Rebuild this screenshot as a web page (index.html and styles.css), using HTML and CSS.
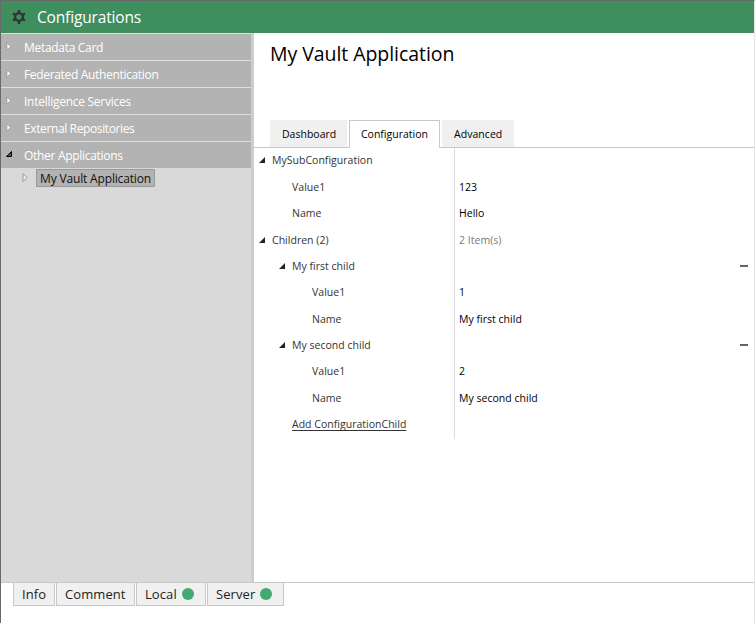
FILE: index.html
```
<!DOCTYPE html>
<html lang="en">
<head>
<meta charset="utf-8">
<title>Configurations</title>
<link rel="stylesheet" href="styles.css">
</head>
<body>
<div class="window">
  <header class="titlebar">
    <svg class="gear" viewBox="0 0 14 14"><circle cx="7" cy="7" r="3.900"/><path d="M7 0v2.500M7 11.500V14M.95 3.500l2.150 1.250M10.900 9.250l2.150 1.250M.95 10.500l2.150-1.250M10.900 4.750l2.150-1.250"/></svg>
    <h1>Configurations</h1>
  </header>
  <div class="main">
    <nav class="sidebar">
      <div class="group"><svg class="arrow" viewBox="0 0 6 9"><path d="M1 1l3.500 3.500L1 8z"/></svg><span>Metadata Card</span></div>
      <div class="group"><svg class="arrow" viewBox="0 0 6 9"><path d="M1 1l3.500 3.500L1 8z"/></svg><span class="fed">Federated Authentication</span></div>
      <div class="group"><svg class="arrow" viewBox="0 0 6 9"><path d="M1 1l3.500 3.500L1 8z"/></svg><span class="mid">Intelligence Services</span></div>
      <div class="group"><svg class="arrow" viewBox="0 0 6 9"><path d="M1 1l3.500 3.500L1 8z"/></svg><span class="tight">External Repositories</span></div>
      <div class="group"><svg class="arrow expanded" viewBox="0 0 6 6"><path d="M5.500.5v5h-5z"/></svg><span>Other Applications</span></div>
      <div class="leaf"><svg class="arrow outline" viewBox="0 0 6 9"><path d="M1 .5l4 4-4 4z"/></svg><span class="selected">My Vault Application</span></div>
    </nav>
    <section class="content">
      <h2>My Vault Application</h2>
      <div class="tabs">
        <div class="tab dash"><span>Dashboard</span></div>
        <div class="tab active"><span>Configuration</span></div>
        <div class="tab adv"><span>Advanced</span></div>
      </div>
      <div class="grid">
        <div class="row l0"><div class="key"><svg class="tri" viewBox="0 0 6 6"><path d="M6 0v6H0z"/></svg><span>MySubConfiguration</span></div><div class="val"></div></div>
        <div class="row l1"><div class="key"><span>Value1</span></div><div class="val">123</div></div>
        <div class="row l1"><div class="key"><span>Name</span></div><div class="val">Hello</div></div>
        <div class="row l0"><div class="key"><svg class="tri" viewBox="0 0 6 6"><path d="M6 0v6H0z"/></svg><span>Children (2)</span></div><div class="val count">2 Item(s)</div></div>
        <div class="row l1"><div class="key"><svg class="tri" viewBox="0 0 6 6"><path d="M6 0v6H0z"/></svg><span>My first child</span></div><div class="val"><i class="minus"></i></div></div>
        <div class="row l2"><div class="key"><span>Value1</span></div><div class="val">1</div></div>
        <div class="row l2"><div class="key"><span>Name</span></div><div class="val">My first child</div></div>
        <div class="row l1"><div class="key"><svg class="tri" viewBox="0 0 6 6"><path d="M6 0v6H0z"/></svg><span>My second child</span></div><div class="val"><i class="minus"></i></div></div>
        <div class="row l2"><div class="key"><span>Value1</span></div><div class="val">2</div></div>
        <div class="row l2"><div class="key"><span>Name</span></div><div class="val">My second child</div></div>
        <div class="row l1"><div class="key"><span class="add">Add ConfigurationChild</span></div><div class="val"></div></div>
      </div>
    </section>
  </div>
  <footer class="bottom">
    <div class="btab info"><span>Info</span></div>
    <div class="btab comment"><span>Comment</span></div>
    <div class="btab local"><span>Local</span><i class="dot"></i></div>
    <div class="btab server"><span>Server</span><i class="dot"></i></div>
  </footer>
</div>
</body>
</html>
```
FILE: styles.css
```
* { box-sizing: border-box; }
body { margin: 0; background: #fff; font-family: "Open Sans", "Noto Sans", sans-serif; }
h1, h2 { margin: 0; font-weight: 400; }
span { white-space: nowrap; }
svg { display: block; flex: none; }

.window {
  width: 755px; height: 623px; display: flex; flex-direction: column;
  border: 1px solid #696969; border-right-color: #e5e5e5; border-bottom: 0;
}
.titlebar { height: 32px; flex: none; display: flex; align-items: center; padding-left: 11px; background: #3e8e5e; color: #fff; }
.gear { width: 14px; height: 14px; fill: none; stroke: #333; stroke-width: 2.4; }
h1 { margin-left: 11px; font-size: 15.5px; line-height: 30px; letter-spacing: -.16px; }

.main { height: 549px; flex: none; display: flex; }
.sidebar { width: 253px; flex: none; border-right: 3px solid #cdcdcd; background: #d9d9d9; color: #fff; font-size: 12px; letter-spacing: -.3px; }
.group { height: 27px; display: flex; border-top: 1px solid #dedede; background: #b3b3b3; line-height: 27px; padding-left: 5px; }
.fed { letter-spacing: -.33px; }
.mid { letter-spacing: -.27px; }
.tight { letter-spacing: -.38px; }
.arrow { width: 6px; height: 9px; margin: 8px 12px 0 0; fill: #fff; stroke: #8c8c8c; stroke-width: .6; }
.arrow.expanded { height: 6px; margin-top: 9px; fill: #555; stroke: #000; stroke-width: 1; }
.arrow.outline { margin: 4px 8px 0 1px; fill: #eee; stroke: #999; stroke-width: 1; }
.leaf { display: flex; padding: 1px 0 0 20px; }
.selected { width: 119px; height: 18px; border: 1px solid #999; background: #b3b3b3; color: #111; line-height: 18px; padding-left: 3px; letter-spacing: -.16px; }

.content { flex: 1; min-width: 0; color: #000; }
h2 { height: 87px; padding-left: 16px; font-size: 19.5px; line-height: 41px; letter-spacing: -.06px; }
.tabs { height: 28px; display: flex; gap: 2px; padding-left: 16px; border-bottom: 1px solid #c8c8c8; font-size: 10.5px; line-height: 28px; }
.tab { height: 27px; background: #f0f0f0; padding-left: 12px; }
.dash { width: 77px; }
.adv { width: 72px; letter-spacing: .05px; }
.active { width: 91px; height: 28px; background: #fff; border: 1px solid #c8c8c8; border-bottom: 0; padding-left: 11px; line-height: 26px; }

.grid { padding-top: .35px; font-size: 10.5px; letter-spacing: .02px; }
.row { display: grid; grid-template-columns: 200px 1fr; height: 26.4px; line-height: 25px; }
.key { display: flex; padding-left: 18px; color: #333; }
.l1 .key { padding-left: 38px; }
.l2 .key { padding-left: 58px; }
.tri { width: 6px; height: 6px; margin: 9px 7px 0 -13px; fill: #222; }
.val { display: flex; border-left: 1px solid #dcdcdc; padding-left: 4px; }
.count { color: #7a7a7a; }
.minus { width: 8px; height: 2px; margin: 11px 6px 0 auto; background: #666; }
.add { height: 18px; text-decoration: underline; text-underline-offset: 2px; }

.bottom { flex: 1; display: flex; gap: 1px; padding-left: 12px; border-top: 1px solid #c8c8c8; font-size: 13px; letter-spacing: .08px; color: #222; }
.btab { height: 23px; display: flex; background: #f0f0f0; border: 1px solid #c8c8c8; border-top: 0; padding-left: 8px; line-height: 23px; }
.info { width: 42px; }
.comment { width: 79px; }
.local { width: 70px; }
.server { width: 77px; }
.dot { width: 12px; height: 12px; margin: 5px 11px 0 auto; border-radius: 50%; background: #44a871; }
```
